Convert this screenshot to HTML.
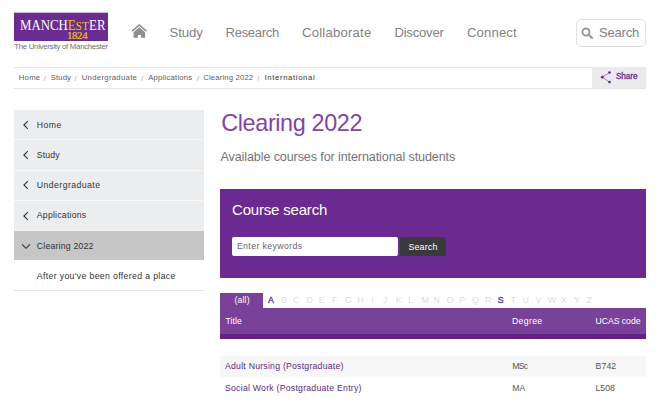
<!DOCTYPE html>
<html lang="en"><head><meta charset="utf-8"><title>Clearing 2022 - International</title>
<style>
*{box-sizing:border-box;margin:0;padding:0}
html,body{width:671px;height:409px;overflow:hidden;background:#fff}
body{font-family:"Liberation Sans","DejaVu Sans",sans-serif;color:#333;position:relative}
.a{position:absolute;white-space:nowrap}
.t{position:absolute;white-space:nowrap;font-weight:normal}
.hr{position:absolute;background:#e4e4e4;height:1px}
.side{position:absolute;left:14px;width:190px;background:#ecedef}
.z{position:absolute;top:293px;width:20px;text-align:center;font-size:8.9px;line-height:15px;color:#dcdcdc}
#tag{left:14.30px;top:42.30px;font-size:7.8px;line-height:10px;color:#707070;letter-spacing:-0.283px;}
#n1{left:169.60px;top:23.96px;font-size:13.1px;line-height:17px;color:#828282;letter-spacing:-0.056px;}
#n2{left:225.60px;top:23.96px;font-size:13.1px;line-height:17px;color:#828282;letter-spacing:-0.341px;}
#n3{left:302.00px;top:23.96px;font-size:13.1px;line-height:17px;color:#828282;letter-spacing:0.229px;}
#n4{left:394.40px;top:23.96px;font-size:13.1px;line-height:17px;color:#828282;letter-spacing:-0.211px;}
#n5{left:467.00px;top:23.96px;font-size:13.1px;line-height:17px;color:#828282;letter-spacing:0.147px;}
#n6{left:599.00px;top:23.96px;font-size:13.1px;line-height:17px;color:#828282;letter-spacing:-0.248px;}
#b1{left:18.75px;top:73.03px;font-size:7.7px;line-height:10px;color:#606060;letter-spacing:0.296px;}
#b1s{left:44.00px;top:73.77px;font-size:7px;line-height:9px;color:#999;letter-spacing:0.000px;}
#b2{left:50.75px;top:73.03px;font-size:7.7px;line-height:10px;color:#606060;letter-spacing:0.121px;}
#b2s{left:74.50px;top:73.77px;font-size:7px;line-height:9px;color:#999;letter-spacing:0.000px;}
#b3{left:81.75px;top:73.03px;font-size:7.7px;line-height:10px;color:#606060;letter-spacing:0.321px;}
#b3s{left:141.30px;top:73.77px;font-size:7px;line-height:9px;color:#999;letter-spacing:0.000px;}
#b4{left:148.25px;top:73.03px;font-size:7.7px;line-height:10px;color:#606060;letter-spacing:0.223px;}
#b4s{left:197.00px;top:73.77px;font-size:7px;line-height:9px;color:#999;letter-spacing:0.000px;}
#b5{left:203.25px;top:73.03px;font-size:7.7px;line-height:10px;color:#606060;letter-spacing:0.169px;}
#b5s{left:257.50px;top:73.77px;font-size:7px;line-height:9px;color:#999;letter-spacing:0.000px;}
#b6{left:264.50px;top:73.03px;font-size:7.7px;line-height:10px;color:#333;letter-spacing:0.653px;}
#sh{left:615.90px;top:70.96px;font-size:8.2px;line-height:11px;color:#6b2c91;letter-spacing:-0.049px;-webkit-text-stroke:0.3px #6b2c91}
#s1{left:36.80px;top:120.49px;font-size:8.7px;line-height:11px;color:#333;letter-spacing:0.429px;}
#s2{left:36.80px;top:150.49px;font-size:8.7px;line-height:11px;color:#333;letter-spacing:0.164px;}
#s3{left:36.80px;top:180.49px;font-size:8.7px;line-height:11px;color:#333;letter-spacing:0.442px;}
#s4{left:36.80px;top:210.49px;font-size:8.7px;line-height:11px;color:#333;letter-spacing:0.229px;}
#s5{left:36.80px;top:241.49px;font-size:8.7px;line-height:11px;color:#333;letter-spacing:0.207px;}
#s6{left:36.80px;top:271.49px;font-size:8.7px;line-height:11px;color:#333;letter-spacing:0.359px;}
#h1{left:221.25px;top:108.49px;font-size:23.4px;line-height:30px;color:#8045a6;letter-spacing:-0.370px;}
#sub{left:220.50px;top:149.03px;font-size:12.6px;line-height:16px;color:#757575;letter-spacing:-0.120px;}
#cs{left:232.00px;top:199.80px;font-size:15px;line-height:20px;color:#fff;letter-spacing:-0.187px;}
#kw{left:236.90px;top:241.49px;font-size:8.7px;line-height:11px;color:#666;letter-spacing:0.415px;}
#sb{left:408.40px;top:240.82px;font-size:8.9px;line-height:12px;color:#fff;letter-spacing:0.171px;}
#all{left:234.60px;top:295.09px;font-size:8.7px;line-height:11px;color:#fff;letter-spacing:0.122px;}
#th1{left:225.60px;top:315.89px;font-size:8.7px;line-height:11px;color:#fff;letter-spacing:0.020px;}
#th2{left:512.00px;top:315.89px;font-size:8.7px;line-height:11px;color:#fff;letter-spacing:0.335px;}
#th3{left:595.40px;top:315.89px;font-size:8.7px;line-height:11px;color:#fff;letter-spacing:-0.027px;}
#r1a{left:225.00px;top:360.74px;font-size:8.7px;line-height:11px;color:#5a2a82;letter-spacing:0.237px;}
#r1b{left:512.25px;top:360.74px;font-size:8.7px;line-height:11px;color:#555;letter-spacing:-0.726px;}
#r1c{left:595.50px;top:360.74px;font-size:8.7px;line-height:11px;color:#555;letter-spacing:0.126px;}
#r2a{left:225.00px;top:382.74px;font-size:8.7px;line-height:11px;color:#5a2a82;letter-spacing:0.247px;}
#r2b{left:512.25px;top:382.74px;font-size:8.7px;line-height:11px;color:#555;letter-spacing:-0.107px;}
#r2c{left:595.50px;top:382.74px;font-size:8.7px;line-height:11px;color:#555;letter-spacing:0.032px;}
#logo{left:14px;top:13px;width:94px;height:28px;background:#6b2c91;box-shadow:0 -1px 0 rgba(107,44,145,.3)}
#logo .m{position:absolute;left:6px;top:4.5px;font-family:"Liberation Serif",serif;font-size:14.5px;line-height:15px;color:#fff;transform:scaleX(.885);transform-origin:0 0;white-space:nowrap}
#logo .m b{font-weight:normal;color:#f5c400}
#logo .m i{font-style:normal;font-size:13px}
#logo .y{position:absolute;left:53px;top:16.5px;font-family:"Liberation Serif",serif;font-size:10.8px;line-height:10px;color:#f5c400;letter-spacing:-0.35px;-webkit-text-stroke:0.2px #f5c400}
#sbox{left:576px;top:19px;width:70px;height:28px;border:1px solid #e0e0e0;border-radius:5px;background:#fff}
#share{left:592px;top:67px;width:54.2px;height:21px;background:#ebebee}
#cs-box{left:220px;top:189px;width:426px;height:89px;background:#6b2a91}
#cs-in{left:231.5px;top:237.3px;width:166px;height:18.5px;background:#fff;border-radius:2px}
#cs-btn{left:400.4px;top:237.3px;width:45.4px;height:18.5px;background:#3a3a3c;border-radius:2.5px}
#alltab{left:220px;top:293px;width:43.2px;height:16px;background:#7a4198}
#thead{left:220px;top:308px;width:426px;height:26px;background:#7a4198}
#thead2{left:220px;top:334px;width:426px;height:4.6px;background:#5e2384}
#row1{left:220px;top:355.5px;width:426px;height:21.3px;background:#f7f7f7}
</style></head><body>
<div id="logo" class="a"><span class="m">MANCH<b>E<i>ST</i></b>ER</span><span class="y">1824</span></div>
<svg class="a" style="left:131px;top:23px" width="17" height="16" viewBox="0 0 17 16"><path d="M8.3 0.9 L0.6 7.6 L1.6 8.8 L8.3 3 L15 8.8 L16 7.6 Z" fill="#8e8f93"/><path d="M8.3 4.2 L2.5 9.3 V14.7 H7 V11.9 H9.9 V14.7 H14.1 V9.3 Z" fill="#8e8f93"/></svg>
<div id="sbox" class="a"><svg style="position:absolute;left:4.3px;top:6.8px" width="13" height="13" viewBox="0 0 13 13"><circle cx="5" cy="5" r="3.5" fill="none" stroke="#999" stroke-width="1.9"/><path d="M7.6 7.6 L11 11" stroke="#999" stroke-width="2.1" stroke-linecap="round"/></svg></div>
<div class="hr" style="left:14px;top:67px;width:632px"></div>
<div class="hr" style="left:14px;top:88px;width:632px"></div>
<div id="share" class="a"><svg style="position:absolute;left:8px;top:3.3px" width="14" height="16" viewBox="0 0 14 16"><path d="M2.25 7.2 L9.5 2.5 M2.25 7.2 L9.5 12.1" stroke="#7b4a9c" stroke-width="0.7" fill="none"/><circle cx="2.25" cy="7.2" r="1.35" fill="#6b2c91"/><circle cx="9.5" cy="2.5" r="1.35" fill="#6b2c91"/><circle cx="9.5" cy="12.1" r="1.35" fill="#6b2c91"/></svg></div>
<div id="sidebg" class="a" style="left:14px;top:110px;width:190px;height:121px;background:#f8f8f9"></div>
<div class="side" style="top:110px;height:29px"></div>
<div class="side" style="top:140px;height:30.2px"></div>
<div class="side" style="top:171px;height:29.2px"></div>
<div class="side" style="top:201px;height:30px"></div>
<div class="side" style="top:231px;height:29.4px;background:#c6c6c6"></div>
<svg class="a" style="left:22px;top:120px" width="8" height="10" viewBox="0 0 8 10"><path d="M5.8 1.2 L1.9 5 L5.8 8.8" stroke="#333" stroke-width="1.1" fill="none"/></svg>
<svg class="a" style="left:22px;top:150px" width="8" height="10" viewBox="0 0 8 10"><path d="M5.8 1.2 L1.9 5 L5.8 8.8" stroke="#333" stroke-width="1.1" fill="none"/></svg>
<svg class="a" style="left:22px;top:180px" width="8" height="10" viewBox="0 0 8 10"><path d="M5.8 1.2 L1.9 5 L5.8 8.8" stroke="#333" stroke-width="1.1" fill="none"/></svg>
<svg class="a" style="left:22px;top:210.5px" width="8" height="10" viewBox="0 0 8 10"><path d="M5.8 1.2 L1.9 5 L5.8 8.8" stroke="#333" stroke-width="1.1" fill="none"/></svg>
<svg class="a" style="left:21px;top:242.5px" width="10" height="7" viewBox="0 0 10 7"><path d="M1 1.3 L5 5.3 L9 1.3" stroke="#333" stroke-width="1.1" fill="none"/></svg>
<div class="hr" style="left:14px;top:290px;width:190px"></div>
<div id="cs-box" class="a"></div><div id="cs-in" class="a"></div><div id="cs-btn" class="a"></div>
<div id="alltab" class="a"></div><div id="thead" class="a"></div><div id="thead2" class="a"></div><div id="row1" class="a"></div>
<div class="t" id="tag">The University of Manchester</div>
<div class="t" id="n1">Study</div>
<div class="t" id="n2">Research</div>
<div class="t" id="n3">Collaborate</div>
<div class="t" id="n4">Discover</div>
<div class="t" id="n5">Connect</div>
<div class="t" id="n6">Search</div>
<div class="t" id="b1">Home</div>
<div class="t" id="b1s">/</div>
<div class="t" id="b2">Study</div>
<div class="t" id="b2s">/</div>
<div class="t" id="b3">Undergraduate</div>
<div class="t" id="b3s">/</div>
<div class="t" id="b4">Applications</div>
<div class="t" id="b4s">/</div>
<div class="t" id="b5">Clearing 2022</div>
<div class="t" id="b5s">/</div>
<div class="t" id="b6">International</div>
<div class="t" id="sh">Share</div>
<div class="t" id="s1">Home</div>
<div class="t" id="s2">Study</div>
<div class="t" id="s3">Undergraduate</div>
<div class="t" id="s4">Applications</div>
<div class="t" id="s5">Clearing 2022</div>
<div class="t" id="s6">After you've been offered a place</div>
<h1 class="t" id="h1">Clearing 2022</h1>
<div class="t" id="sub">Available courses for international students</div>
<h2 class="t" id="cs">Course search</h2>
<div class="t" id="kw">Enter keywords</div>
<div class="t" id="sb">Search</div>
<div class="t" id="all">(all)</div>
<div class="t" id="th1">Title</div>
<div class="t" id="th2">Degree</div>
<div class="t" id="th3">UCAS code</div>
<div class="t" id="r1a">Adult Nursing (Postgraduate)</div>
<div class="t" id="r1b">MSc</div>
<div class="t" id="r1c">B742</div>
<div class="t" id="r2a">Social Work (Postgraduate Entry)</div>
<div class="t" id="r2b">MA</div>
<div class="t" id="r2c">L508</div>
<span class="z" style="left:261.0px;color:#5e2a8a;-webkit-text-stroke:0.3px #5e2a8a">A</span>
<span class="z" style="left:274.0px">B</span>
<span class="z" style="left:286.1px">C</span>
<span class="z" style="left:299.6px">D</span>
<span class="z" style="left:311.8px">E</span>
<span class="z" style="left:324.6px">F</span>
<span class="z" style="left:338.4px">G</span>
<span class="z" style="left:350.7px">H</span>
<span class="z" style="left:362.5px">I</span>
<span class="z" style="left:375.3px">J</span>
<span class="z" style="left:388.6px">K</span>
<span class="z" style="left:400.6px">L</span>
<span class="z" style="left:415.3px">M</span>
<span class="z" style="left:426.8px">N</span>
<span class="z" style="left:440.2px">O</span>
<span class="z" style="left:452.0px">P</span>
<span class="z" style="left:465.3px">Q</span>
<span class="z" style="left:478.1px">R</span>
<span class="z" style="left:490.7px;color:#5e2a8a;-webkit-text-stroke:0.3px #5e2a8a">S</span>
<span class="z" style="left:503.3px">T</span>
<span class="z" style="left:515.7px">U</span>
<span class="z" style="left:528.5px">V</span>
<span class="z" style="left:542.0px">W</span>
<span class="z" style="left:553.8px">X</span>
<span class="z" style="left:566.9px">Y</span>
<span class="z" style="left:579.0px">Z</span>
</body></html>
